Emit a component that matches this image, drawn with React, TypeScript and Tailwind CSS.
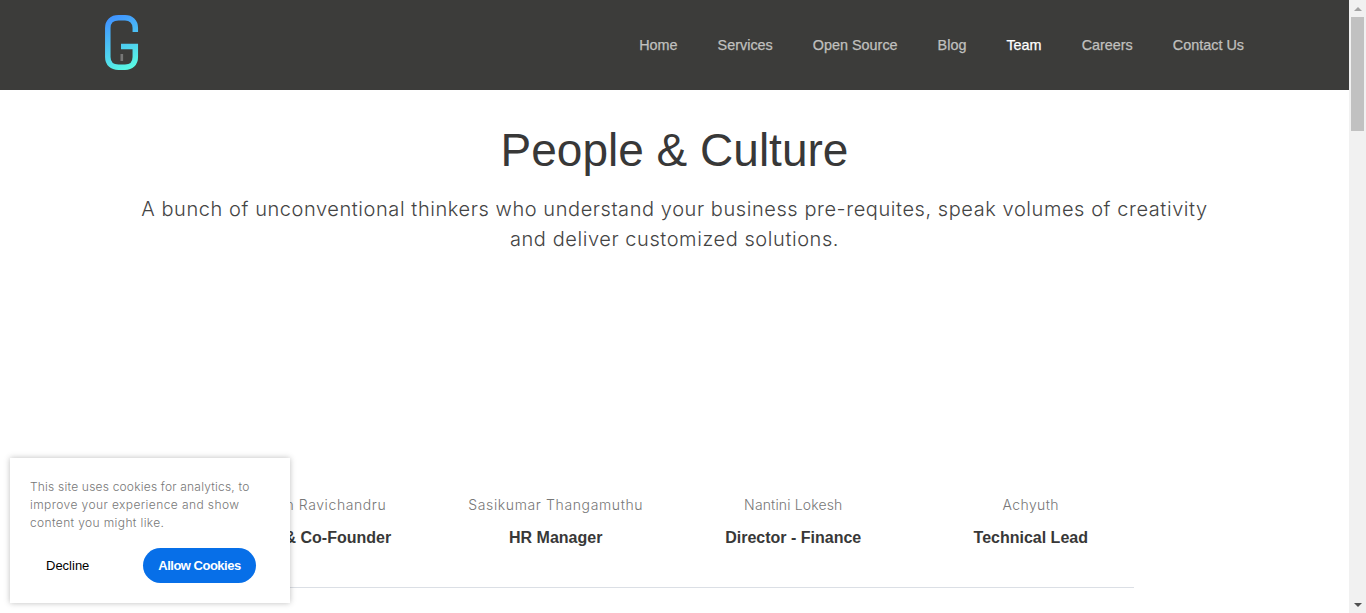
const navItems = ["Home", "Services", "Open Source", "Blog", "Team", "Careers", "Contact Us"];

const members = [
  { name: "Pravin Ravichandru", role: "CEO & Co-Founder", tracking: "tracking-[0.58px]" },
  { name: "Sasikumar Thangamuthu", role: "HR Manager", tracking: "tracking-[0.62px]" },
  { name: "Nantini Lokesh", role: "Director - Finance", tracking: "tracking-[0.14px]" },
  { name: "Achyuth", role: "Technical Lead", tracking: "tracking-[0.4px]" },
];

function Logo() {
  return (
    <svg width="34" height="56" viewBox="0 0 34 56" fill="none" aria-label="G">
      <defs>
        <linearGradient id="logo" x1="6" y1="4" x2="30" y2="54" gradientUnits="userSpaceOnUse">
          <stop stopColor="#4196ff" />
          <stop offset="1" stopColor="#5affe2" />
        </linearGradient>
      </defs>
      <path
        d="M30.3 17V13C30.3 6.500 26 2.800 20 2.800H13.500C7 2.800 2.800 6.500 2.800 13V42C2.800 48.500 7 52.300 13.500 52.300H20C26 52.300 30.300 48.500 30.300 42V31.500H16"
        stroke="url(#logo)"
        strokeWidth="5.5"
      />
      <path d="M16.800 39V46" stroke="#777776" strokeWidth="2.600" />
    </svg>
  );
}

function Scrollbar() {
  return (
    <div className="flex w-[17px] shrink-0 flex-col items-center bg-[#f1f1f1]" aria-hidden="true">
      <div className="flex h-[17px] w-full items-center justify-center">
        <svg width="8" height="4" viewBox="0 0 8 4"><path d="M0 4L4 0L8 4Z" fill="#a3a3a3" /></svg>
      </div>
      <div className="h-[114px] w-[13px] bg-[#c1c1c1]" />
      <div className="mt-auto flex h-[17px] w-full items-center justify-center">
        <svg width="8" height="4" viewBox="0 0 8 4"><path d="M0 0L4 4L8 0Z" fill="#505050" /></svg>
      </div>
    </div>
  );
}

function CookieNotice() {
  return (
    <div className="absolute bottom-[10px] left-[10px] h-[145px] w-[280px] bg-white px-5 pt-5 shadow-[0_0_6px_rgba(0,0,0,0.26)]">
      <p className="font-[Inter,sans-serif] text-[12px] leading-[18px] font-light text-[#777]">
        <span className="block whitespace-nowrap tracking-[0.2px]">This site uses cookies for analytics, to</span>
        <span className="block whitespace-nowrap tracking-[0.41px]">improve your experience and show</span>
        <span className="block whitespace-nowrap tracking-[0.37px]">content you might like.</span>
      </p>
      <div className="mt-4 flex justify-between pr-[14px] pl-4 text-[13px]">
        <button className="h-[35px] text-black">Decline</button>
        <button className="h-[35px] w-[113px] rounded-full bg-[#076fe8] font-bold tracking-[-0.5px] whitespace-nowrap text-white">
          Allow Cookies
        </button>
      </div>
    </div>
  );
}

export default function App() {
  return (
    <div className="relative flex h-[613px] w-[1366px] overflow-hidden bg-white font-['Liberation_Sans',Arial,sans-serif]">
      <div className="flex min-w-0 flex-1 flex-col">
        <header className="flex h-[90px] shrink-0 justify-between bg-[#3c3c3a] pr-[105px] pl-[105px]">
          <div className="pt-[15px]"><Logo /></div>
          <nav className="flex h-[90px] items-center gap-10 pt-[2px] text-[14.400px] [-webkit-text-stroke:0.25px]">
            {navItems.map((item) => (
              <a key={item} className={item === "Team" ? "text-white" : "text-[#c0c0bf]"}>{item}</a>
            ))}
          </nav>
        </header>
        <main className="text-[#383838]">
          <h1 className="pt-[30px] text-center text-[46px] leading-[60px]">People &amp; Culture</h1>
          <p className="mt-[14px] text-center font-[Inter,sans-serif] text-[20px] leading-[30px] font-light text-[#444]">
            <span className="block whitespace-nowrap tracking-[0.57px]">
              A bunch of unconventional thinkers who understand your business pre-requites, speak volumes of creativity
            </span>
            <span className="block tracking-[0.57px]">and deliver customized solutions.</span>
          </p>
          <section className="mx-auto mt-[241px] grid w-[950px] grid-cols-4 text-center">
            {members.map((m) => (
              <div key={m.name}>
                <p className={`font-[Inter,sans-serif] text-[14px] leading-5 font-light whitespace-nowrap text-[#777] ${m.tracking}`}>{m.name}</p>
                <h2 className="mt-[13px] text-[16px] leading-5 font-bold">{m.role}</h2>
              </div>
            ))}
          </section>
          <hr className="mx-auto mt-[39px] w-[919px] border-[#dbdfe5]" />
        </main>
      </div>
      <Scrollbar />
      <CookieNotice />
    </div>
  );
}
